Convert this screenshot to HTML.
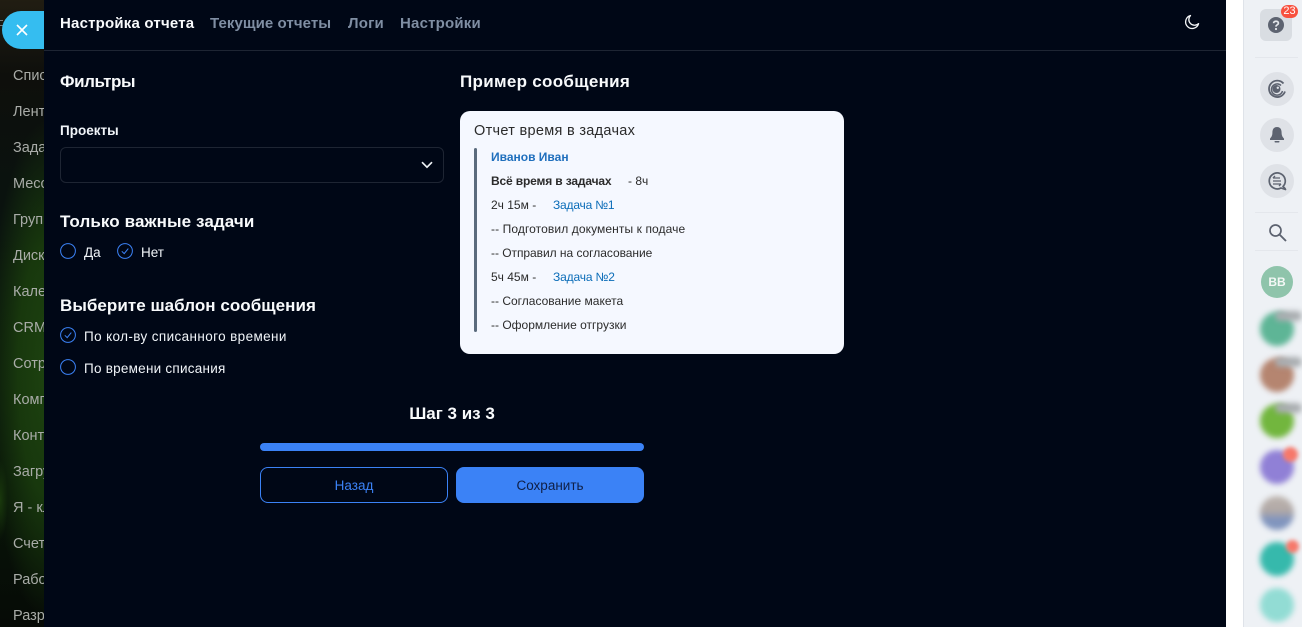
<!DOCTYPE html>
<html lang="ru"><head><meta charset="utf-8"><title>Настройка отчета</title>
<style>
*{box-sizing:border-box;margin:0;padding:0}
html,body{width:1302px;height:627px;overflow:hidden;background:#fff;font-family:"Liberation Sans","Noto Sans CJK SC",sans-serif}
.a{position:absolute;white-space:nowrap}
#left{left:0;top:0;width:44px;height:627px;overflow:hidden;background:radial-gradient(ellipse 60px 250px at 48px 370px,#1d4210 0%,#18380d 50%,rgba(14,28,10,0) 100%),radial-gradient(ellipse 8px 40px at 0 500px,#1a3a0c,rgba(20,40,10,0)),linear-gradient(#211d12 0,#0e0f0c 12%,#0a120e 30%,#0a170c 60%,#081408 80%,#060a06 100%)}
#left div{position:absolute;left:13px;font-size:14.5px;line-height:20px;color:#a9aca8;white-space:nowrap}
#main{left:44px;top:0;width:1182px;height:627px;background:#000716}
.t{font-size:15px;font-weight:bold;line-height:20px;color:#7f8ea3}
.h{font-size:17px;font-weight:bold;line-height:24px;color:#f8fafc}
.l{font-size:13.5px;line-height:20px;color:#f1f5f9}
.r{width:16px;height:16px}
.m{font-size:12px;line-height:16px;color:#2b2b2b}
.b{color:#0a6cb8}
</style></head><body>
<div class="a" id="left">
<div style="top:66px">Список</div><div style="top:102px">Лента</div><div style="top:138px">Задачи</div><div style="top:174px">Месседжер</div><div style="top:210px">Группы</div><div style="top:246px">Диск</div><div style="top:282px">Календарь</div><div style="top:318px">CRM</div><div style="top:354px">Сотрудники</div><div style="top:390px">Компании</div><div style="top:426px">Контакты</div><div style="top:462px">Загрузки</div><div style="top:498px">Я - клиент</div><div style="top:534px">Счета</div><div style="top:570px">Работы</div><div style="top:606px">Разработка</div>
</div>
<div class="a" style="left:0;top:20px;width:3px;height:6px;border-top:1px solid #777;border-bottom:1px solid #777"></div>
<div class="a" style="left:2px;top:11px;width:42px;height:38px;background:#35bdf0;border-radius:19px 0 0 19px"></div>
<svg class="a" style="left:16px;top:24px" width="12" height="12" viewBox="0 0 12 12"><path d="M1 1L11 11M11 1L1 11" stroke="#fff" stroke-width="1.6" fill="none"/></svg>
<div class="a" id="main"></div>
<div class="a" style="left:44px;top:50px;width:1182px;height:1px;background:#1e2533"></div>

<div class="a t" style="left:60px;top:14px;color:#f8fafc;letter-spacing:.2px">Настройка отчета</div>
<div class="a t" style="left:210px;top:14px;letter-spacing:.07px">Текущие отчеты</div>
<div class="a t" style="left:348px;top:14px;letter-spacing:.2px">Логи</div>
<div class="a t" style="left:400px;top:14px;letter-spacing:.2px">Настройки</div>
<svg class="a" style="left:1184px;top:14px" width="16" height="16" viewBox="0 0 16 16"><path d="M6.5 1.500A6.600 6.600 0 1 0 14.600 9.600 5.600 5.600 0 0 1 6.500 1.500Z" stroke="#f4f6f8" stroke-width="1.300" fill="none" stroke-linejoin="round"/></svg>

<div class="a h" style="left:60px;top:70px;letter-spacing:-.4px">Фильтры</div>
<div class="a" style="left:60px;top:121px;font-size:13.5px;font-weight:bold;line-height:20px;color:#f1f5f9">Проекты</div>
<div class="a" style="left:60px;top:147px;width:384px;height:36px;border:1px solid #1e2533;border-radius:6px"></div>
<svg class="a" style="left:420px;top:160px" width="14" height="10" viewBox="0 0 14 10"><path d="M2 2.200L7 7.200 12 2.200" stroke="#eef2f6" stroke-width="1.700" fill="none"/></svg>

<div class="a h" style="left:60px;top:210px;letter-spacing:.1px">Только важные задачи</div>
<svg class="a r" style="left:60px;top:243px" viewBox="0 0 16 16"><circle cx="8" cy="8" r="7.400" stroke="#3b82f6" fill="none"/></svg>
<div class="a l" style="left:84px;top:243px">Да</div>
<svg class="a r" style="left:117px;top:243px" viewBox="0 0 16 16"><circle cx="8" cy="8" r="7.400" stroke="#3b82f6" fill="none"/><path d="M4.800 8.300L7.200 10.600 11.300 5.600" stroke="#3b82f6" fill="none"/></svg>
<div class="a l" style="left:141px;top:243px">Нет</div>

<div class="a h" style="left:60px;top:294px;letter-spacing:.04px">Выберите шаблон сообщения</div>
<svg class="a r" style="left:60px;top:327px" viewBox="0 0 16 16"><circle cx="8" cy="8" r="7.400" stroke="#3b82f6" fill="none"/><path d="M4.800 8.300L7.200 10.600 11.300 5.600" stroke="#3b82f6" fill="none"/></svg>
<div class="a l" style="left:84px;top:327px;letter-spacing:.38px">По кол-ву списанного времени</div>
<svg class="a r" style="left:60px;top:359px" viewBox="0 0 16 16"><circle cx="8" cy="8" r="7.400" stroke="#3b82f6" fill="none"/></svg>
<div class="a l" style="left:84px;top:359px;letter-spacing:.25px">По времени списания</div>

<div class="a h" style="left:460px;top:70px;letter-spacing:.3px">Пример сообщения</div>
<div class="a" style="left:460px;top:111px;width:384px;height:243px;background:#f5f8ff;border-radius:10px"></div>
<div class="a" style="left:474px;top:122px;font-size:14.5px;line-height:18px;color:#2b2b2b;letter-spacing:.3px">Отчет время в задачах</div>
<div class="a" style="left:474px;top:148px;width:3px;height:184px;background:#5b6b7d;border-radius:2px"></div>
<div class="a m" style="left:491px;top:149px;font-weight:bold;color:#1f6fbd">Иванов Иван</div>
<div class="a m" style="left:491px;top:173px;font-weight:bold;letter-spacing:-.15px">Всё время в задачах</div>
<div class="a m" style="left:628px;top:173px">- 8ч</div>
<div class="a m" style="left:491px;top:197px">2ч 15м -</div>
<div class="a m b" style="left:553px;top:197px;letter-spacing:-.2px">Задача №1</div>
<div class="a m" style="left:491px;top:221px;letter-spacing:.1px">-- Подготовил документы к подаче</div>
<div class="a m" style="left:491px;top:245px;letter-spacing:-.04px">-- Отправил на согласование</div>
<div class="a m" style="left:491px;top:269px">5ч 45м -</div>
<div class="a m b" style="left:553px;top:269px;letter-spacing:-.15px">Задача №2</div>
<div class="a m" style="left:491px;top:293px">-- Согласование макета</div>
<div class="a m" style="left:491px;top:317px">-- Оформление отгрузки</div>

<div class="a h" style="left:260px;top:402px;width:384px;text-align:center">Шаг 3 из 3</div>
<div class="a" style="left:260px;top:443px;width:384px;height:8px;background:#3b82f6;border-radius:4px"></div>
<div class="a" style="left:260px;top:467px;width:188px;height:36px;border:1px solid #3b82f6;border-radius:8px;color:#3b82f6;font-size:13.5px;line-height:36px;text-align:center">Назад</div>
<div class="a" style="left:456px;top:467px;width:188px;height:36px;background:#3b82f6;border-radius:8px;color:#0f1f45;font-size:13.5px;line-height:38px;text-align:center">Сохранить</div>

<div class="a" style="left:1243px;top:0;width:59px;height:627px;background:#eef1f5;border-left:1px solid #dfe3e9"></div>
<div class="a" style="left:1260px;top:9px;width:32px;height:32px;background:#d9dde2;border-radius:6px"></div>
<svg class="a" style="left:1268px;top:17px" width="16" height="16" viewBox="0 0 16 16"><circle cx="8" cy="8" r="8" fill="#5d6370"/><path d="M5.600 6.200C5.700 3.600 10.400 3.600 10.400 6.200 10.400 7.900 8 7.800 8 9.600" stroke="#e3e6ea" stroke-width="1.700" fill="none"/><circle cx="8" cy="12" r="1.100" fill="#e3e6ea"/></svg>
<div class="a" style="left:1281px;top:5px;width:17px;height:13px;background:#f8513f;border-radius:7px;color:#fff;font-size:11px;line-height:13px;text-align:center">23</div>
<div class="a" style="left:1255px;top:57px;width:43px;height:1px;background:#e4e7ec"></div>
<div class="a" style="left:1260px;top:72px;width:34px;height:34px;background:#dfe2e7;border-radius:50%"></div>
<svg class="a" style="left:1267px;top:79px" width="20" height="20" viewBox="0 0 20 20"><path d="M16.500 4.500A8.200 8.200 0 1 0 18 12.500" stroke="#5d6370" stroke-width="1.800" fill="none"/><path d="M14 6.500A5.600 5.600 0 1 0 15.500 12" stroke="#5d6370" stroke-width="1.500" fill="none"/><circle cx="9.500" cy="10" r="4" fill="#5d6370"/><circle cx="10.800" cy="8.800" r="1.200" fill="#dfe2e7"/></svg>
<div class="a" style="left:1260px;top:118px;width:34px;height:34px;background:#dfe2e7;border-radius:50%"></div>
<svg class="a" style="left:1269px;top:126px" width="16" height="18" viewBox="0 0 16 18"><path d="M8 1C4.600 1 3.400 3.600 3.400 6.600 3.400 9.600 2.400 11 1 12.600V14H15V12.600C13.600 11 12.600 9.600 12.600 6.600 12.600 3.600 11.400 1 8 1Z" fill="#5d6370"/><rect x="5.500" y="15" width="5" height="1.500" rx=".7" fill="#5d6370"/></svg>
<div class="a" style="left:1260px;top:164px;width:34px;height:34px;background:#dfe2e7;border-radius:50%"></div>
<svg class="a" style="left:1267px;top:171px" width="20" height="20" viewBox="0 0 20 20"><path d="M18 17.500L16 15.500A8 8 0 1 0 14 17L18.500 18.500Z" stroke="#5d6370" stroke-width="1.700" fill="none" stroke-linejoin="round"/><path d="M6 7H13M6 7L8 5M14 10H6M6 13H14M14 13L12 15" stroke="#5d6370" stroke-width="1.300" fill="none"/></svg>
<div class="a" style="left:1255px;top:212px;width:43px;height:1px;background:#e4e7ec"></div>
<svg class="a" style="left:1268px;top:223px" width="19" height="19" viewBox="0 0 19 19"><circle cx="7.500" cy="7.500" r="5.500" stroke="#5d6370" stroke-width="1.700" fill="none"/><path d="M11.500 11.500L18 18" stroke="#5d6370" stroke-width="1.900"/></svg>
<div class="a" style="left:1255px;top:250px;width:43px;height:1px;background:#e4e7ec"></div>
<div class="a" style="left:1261px;top:266px;width:32px;height:32px;background:#8fc4ab;border-radius:50%;color:#f4f8f6;font-size:12px;font-weight:bold;line-height:33px;text-align:center">BB</div>

<div class="a" style="left:1260px;top:312px;width:34px;height:34px;border-radius:50%;background:#5eb596;filter:blur(3px)"></div>
<div class="a" style="left:1275px;top:311px;width:27px;height:10px;border-radius:5px;background:#a9adb0;filter:blur(3px)"></div>
<div class="a" style="left:1260px;top:358px;width:34px;height:34px;border-radius:50%;background:#b58570;filter:blur(3px)"></div>
<div class="a" style="left:1275px;top:357px;width:27px;height:10px;border-radius:5px;background:#a9adb0;filter:blur(3px)"></div>
<div class="a" style="left:1260px;top:404px;width:34px;height:34px;border-radius:50%;background:#72b63e;filter:blur(3px)"></div>
<div class="a" style="left:1275px;top:403px;width:27px;height:10px;border-radius:5px;background:#a9adb0;filter:blur(3px)"></div>
<div class="a" style="left:1260px;top:450px;width:34px;height:34px;border-radius:50%;background:#9080d6;filter:blur(3px)"></div>
<div class="a" style="left:1283px;top:447px;width:15px;height:15px;border-radius:50%;background:#f6786a;filter:blur(2px)"></div>
<div class="a" style="left:1260px;top:496px;width:34px;height:34px;border-radius:50%;background:linear-gradient(#bdb4ae 0,#b0a8a6 45%,#7f94bf 70%,#8296bc 100%);filter:blur(3px)"></div>
<div class="a" style="left:1260px;top:542px;width:34px;height:34px;border-radius:50%;background:#36b9ac;filter:blur(3px)"></div>
<div class="a" style="left:1286px;top:540px;width:13px;height:13px;border-radius:50%;background:#f6786a;filter:blur(2px)"></div>
<div class="a" style="left:1260px;top:588px;width:34px;height:34px;border-radius:50%;background:#92dcd4;filter:blur(3px)"></div>
</body></html>
